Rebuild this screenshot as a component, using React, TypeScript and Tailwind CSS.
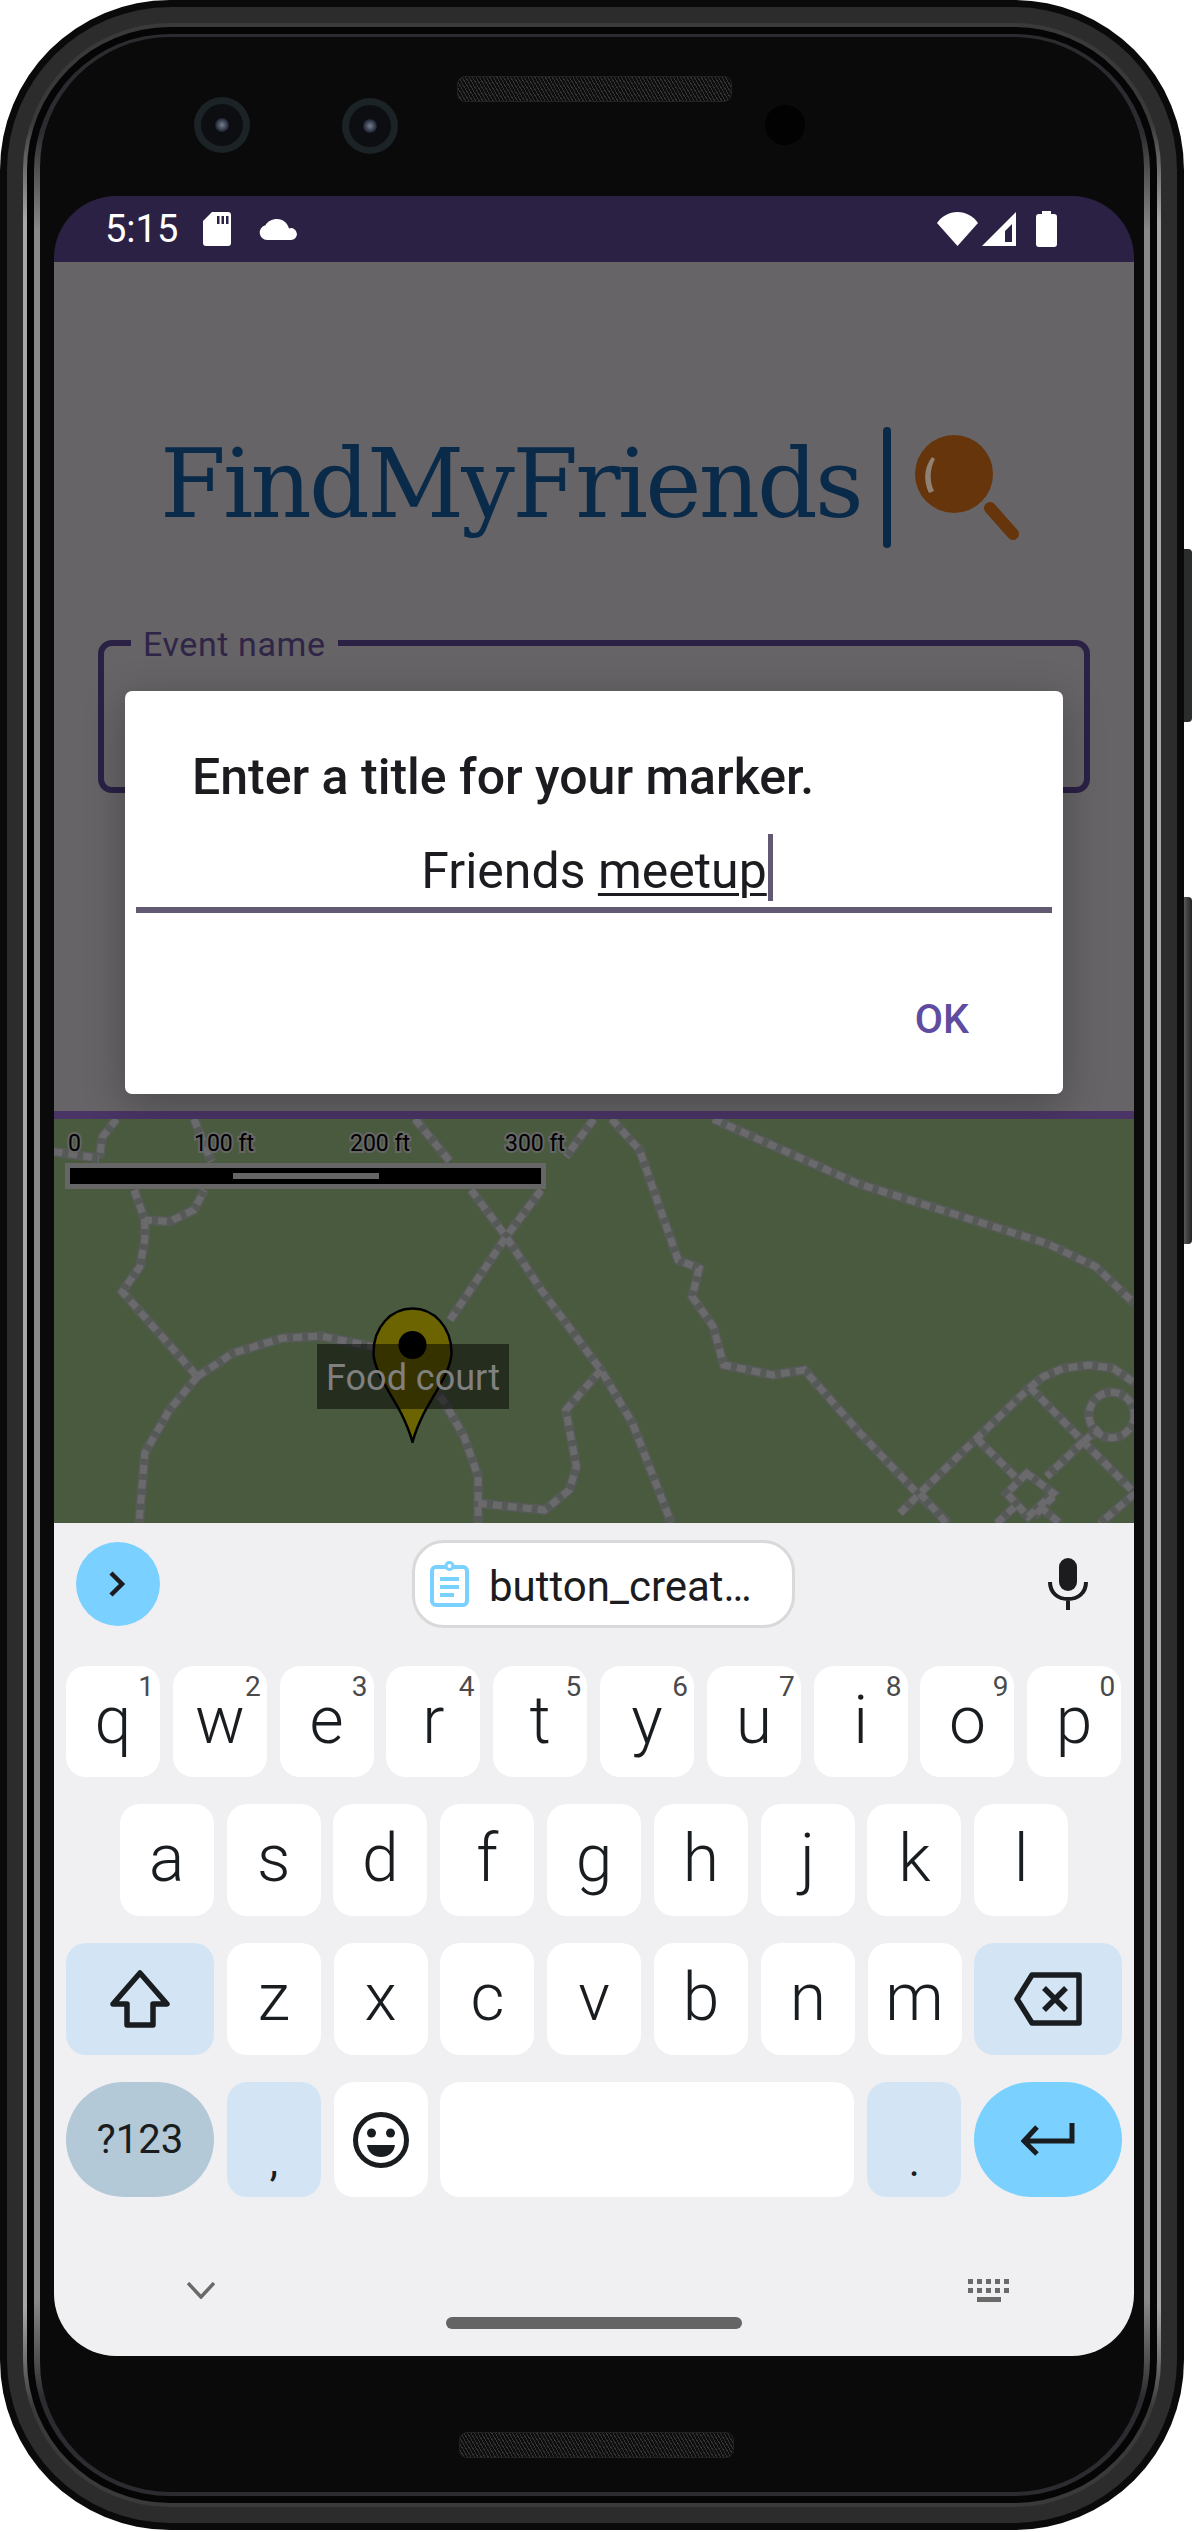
const row1 = [["q","1"],["w","2"],["e","3"],["r","4"],["t","5"],["y","6"],["u","7"],["i","8"],["o","9"],["p","0"]];
const row2 = ["a","s","d","f","g","h","j","k","l"];
const row3 = ["z","x","c","v","b","n","m"];

const trails = [
  "M95 57 L75 110 L70 175 M5 155 L70 175 M205 57 L230 185",
  "M120 270 L135 360 L170 365 L205 330 L220 270",
  "M135 360 L135 420 L128 500 L103 575 L210 830",
  "M210 830 L260 760 L330 715 L385 708 L460 740 L530 830 L560 900 L590 1010 L610 1130 L610 1268",
  "M210 830 L170 930 L135 1060 L127 1268",
  "M520 57 L570 185 M600 270 L650 410 L700 570 L785 810 L830 970 L885 1268",
  "M775 57 L735 170 M700 270 L650 410 L570 660",
  "M800 57 L840 150 L865 300 L895 480 L925 505 L915 590 L945 680 L960 795 L1030 825 L1075 810 L1150 990 L1240 1190 L1280 1268",
  "M785 810 L735 930 L750 1100 L740 1170 L705 1230 L610 1210",
  "M945 57 L1150 250 L1420 430 L1490 500 L1545 610",
];
const corner = [
  "M0 640 L60 580 L230 415 L390 262 L430 230 L490 205 L570 195 L640 205 L705 250",
  "M390 262 L550 425 L705 580",
  "M230 415 L350 535",
  "M380 520 L320 580 L385 650 L460 580 Z",
  "M550 425 L440 530",
  "M550 425 L600 385",
  "M290 670 L350 615",
  "M420 620 L480 670",
  "M460 590 L400 650",
  "M705 580 L600 670",
  "M60 580 L140 670",
];

function Trails({ paths, circle }: { paths: string[]; circle?: boolean }) {
  return (
    <>
      {[{ s: "#565a57", w: 10, a: undefined }, { s: "#6a6a6c", w: 7, a: "9 6" }].map((l, i) => (
        <g key={i} fill="none" stroke={l.s} strokeWidth={l.w} strokeDasharray={l.a}>
          {paths.map((d, j) => (
            <path key={j} d={d} vectorEffect="non-scaling-stroke" />
          ))}
          {circle ? <circle cx="635" cy="345" r="68" vectorEffect="non-scaling-stroke" /> : null}
        </g>
      ))}
    </>
  );
}

function Key({ label, hint, className = "bg-white", w = "w-[94px]" }: { label: string; hint?: string; className?: string; w?: string }) {
  return (
    <div className={`relative flex h-full ${w} shrink-0 items-center justify-center rounded-[20px] ${className} text-[66px] font-[350] leading-none text-[#1a1d20]`}>
      <span className="relative top-[-1px]">{label}</span>
      {hint ? <span className="absolute right-[6px] top-[3px] text-[28px] font-normal leading-[36px] text-[#4a4a4c]">{hint}</span> : null}
    </div>
  );
}

function Speaker({ className }: { className: string }) {
  return (
    <div className={`h-[26px] w-[275px] rounded-[8px] border border-[#222] bg-[#0c0c0c] bg-[repeating-linear-gradient(60deg,#333_0_1px,#0e0e0e_1px_3px)] ${className}`} />
  );
}

function Camera({ className }: { className: string }) {
  return (
    <div className={`flex h-[56px] w-[56px] shrink-0 items-center justify-center rounded-full bg-[#1b2327] ${className}`}>
      <div className="flex h-[42px] w-[42px] items-center justify-center rounded-full bg-[#0d0e12]">
        <div className="h-[14px] w-[14px] rounded-full bg-[radial-gradient(circle,#76808f_0,#1d2130_70%)]" />
      </div>
    </div>
  );
}

export default function App() {
  return (
    <div className="relative h-[2532px] w-[1194px] overflow-hidden bg-white font-['Roboto',sans-serif]">
      <div className="absolute left-[1182px] top-[549px] h-[173px] w-[10px] rounded-r-[4px] bg-[#2b2c2c]" />
      <div className="absolute left-[1182px] top-[897px] h-[347px] w-[10px] rounded-r-[4px] bg-[linear-gradient(to_right,#666,#222)]" />
      <div className="relative h-[2530px] w-[1184px] rounded-[170px] bg-[#0a0a0a] p-[7px]">
        <div className="h-full rounded-[163px] bg-[#2c2c2c] p-[16px]">
          <div className="h-full rounded-[147px] bg-[linear-gradient(to_bottom,#3a3a3a_0,#3a3a3a_4%,#a8a8a8_8%,#a8a8a8_92%,#3a3a3a_96%,#3a3a3a_100%)] p-[4px]">
            <div className="h-full rounded-[143px] bg-[#050505] p-[7px]">
              <div className="h-full rounded-[136px] bg-[linear-gradient(to_bottom,#2c2c30_0,#2c2c30_4%,#8a8a8a_8%,#8a8a8a_92%,#2c2c30_96%,#2c2c30_100%)] p-[6px] pb-[4px] pt-[3px]">
                <div className="h-full rounded-[130px] bg-[#0a0a0a] pl-[14px] pr-[7px]">
                  <div className="flex h-[159px] items-start pl-[140px]">
                    <Camera className="mt-[60px]" />
                    <Camera className="ml-[92px] mt-[61px]" />
                    <Speaker className="ml-[59px] mt-[39px] shrink-0" />
                    <div className="ml-[33px] mt-[68px] h-[40px] w-[40px] shrink-0 rounded-full bg-[#020202]" />
                  </div>

                  <div className="flex h-[2160px] w-[1080px] flex-col overflow-hidden rounded-[62px]">
                    {/* status bar */}
                    <div className="flex h-[66px] shrink-0 items-center bg-[#2b2145] pl-[51px] pr-[77px] text-white">
                      <span className="w-[74px] text-[38px] leading-none">5:15</span>
                      <svg className="ml-[24px]" width="28" height="34" viewBox="0 0 28 34">
                        <path fillRule="evenodd" fill="#fff" d="M9 0H25a3 3 0 0 1 3 3V31a3 3 0 0 1-3 3H3a3 3 0 0 1-3-3V9ZM14 4V12H16.500V4ZM18.500 4V12H21V4ZM23 4V12H25.500V4Z" />
                      </svg>
                      <svg className="ml-[28px]" width="38" height="21" viewBox="0 0 38 21">
                        <path fill="#fff" d="M8 21A7.500 7.500 0 0 1 6.500 6.200C8.500 2.500 13 0 18 0C24 0 28.500 4 30 9.500A6 6 0 0 1 38 15A6 6 0 0 1 32 21Z" />
                      </svg>
                      <svg className="ml-auto" width="41" height="34" viewBox="0 0 41 34">
                        <path fill="#fff" d="M20.500 34L0 11C5 4 12 0 20.500 0S36 4 41 11Z" />
                      </svg>
                      <svg className="ml-[4px]" width="34" height="34" viewBox="0 0 34 34">
                        <path fillRule="evenodd" fill="#fff" d="M34 0V34H0ZM23 19V30H30V12Z" />
                      </svg>
                      <svg className="ml-[20px]" width="21" height="36" viewBox="0 0 21 36">
                        <path fill="#fff" d="M6 0H15V3H18A3 3 0 0 1 21 6V33A3 3 0 0 1 18 36H3A3 3 0 0 1 0 33V6A3 3 0 0 1 3 3H6Z" />
                      </svg>
                    </div>

                    {/* dimmed page */}
                    <div className="relative h-[849px] shrink-0 bg-[#666467] pt-[165px]">
                      <div className="flex h-[121px] items-start pl-[106px]">
                        <span className="w-[723px] shrink-0 pt-[2px] font-['DejaVu_Serif',serif] text-[95px] leading-[110px] tracking-[-2.850px] text-[#0a2a4a]">FindMyFriends</span>
                        <div className="h-[121px] w-[8px] shrink-0 rounded-full bg-[#0a2a4a]" />
                        <svg className="ml-[24px] mt-[8px]" width="110" height="106" viewBox="0 0 110 106">
                          <circle cx="39" cy="39" r="39" fill="#66350c" />
                          <path d="M14 58C8 46 9 32 17 22L20 24C15 33 14 46 19 56Z" fill="#8f8275" />
                          <path d="M75 73L98 99" stroke="#66350c" strokeWidth="12" strokeLinecap="round" />
                        </svg>
                      </div>
                      <div className="relative mx-[44px] mt-[92px] h-[153px] rounded-[14px] border-[6px] border-[#2b2145]">
                        <span className="absolute left-[27px] top-[-22px] bg-[#666467] px-[12px] text-[34px] leading-[40px] tracking-[0.6px] text-[#2f2547]">Event name</span>
                      </div>

                      {/* dialog */}
                      <div className="absolute left-[71px] top-[429px] h-[403px] w-[938px] rounded-[7px] bg-white pt-[56px] shadow-[0_10px_40px_rgba(0,0,0,0.28)]">
                        <div className="pl-[67px] text-[50px] font-medium leading-[60px] text-[#1c1b1f]">Enter a title for your marker.</div>
                        <div className="mx-[11px] mt-[34px] border-b-[6px] border-[#625a73] pb-[6px] text-center text-[50px] leading-[60px] text-[#1c1b1f]">
                          <span className="relative">
                            Friends <span className="underline decoration-[3px] underline-offset-[5px]">meetup</span>
                            <span className="absolute left-full top-[-8px] ml-[1px] h-[67px] w-[5px] bg-[#625a73]" />
                          </span>
                        </div>
                        <div className="mt-[82px] pr-[94px] text-right text-[41px] font-medium leading-[48px] text-[#5f4ba0]">OK</div>
                      </div>
                    </div>

                    <div className="h-[8px] shrink-0 bg-[#4a3566]" />

                    {/* map */}
                    <div className="relative h-[404px] shrink-0 overflow-hidden bg-[#4a5a3f]">
                      <svg className="absolute inset-0" width="1080" height="404" viewBox="0 0 1080 404">
                        <g transform="translate(-4 -19) scale(0.7018 0.3333)">
                          <Trails paths={trails} />
                        </g>
                        <g transform="translate(846 181) scale(0.3333)">
                          <Trails paths={corner} circle />
                        </g>
                      </svg>
                      {[["0", 14], ["100 ft", 140], ["200 ft", 296], ["300 ft", 451]].map(([t, x]) => (
                        <span key={t} className="absolute top-[11px] text-[23px] leading-[28px] text-black [-webkit-text-stroke:4px_#666] [paint-order:stroke_fill]" style={{ left: x as number }}>{t}</span>
                      ))}
                      <div className="absolute left-[11px] top-[44px] flex h-[26px] w-[481px] items-center justify-center border-[5px] border-[#666] bg-black">
                        <div className="h-[6px] w-[146px] bg-[#666]" />
                      </div>
                      <svg className="absolute left-[318px] top-[188px]" width="81" height="136" viewBox="0 0 81 136">
                        <path d="M40.500 1.500C62 1.500 79.500 20 79.500 46C79.500 62 64 84 52 106C47 116 43 126 40.500 135C38 126 34 116 29 106C17 84 1.500 62 1.500 46C1.500 20 19 1.500 40.500 1.500Z" fill="#6b6400" stroke="#000" strokeWidth="2.500" />
                        <circle cx="40.500" cy="38" r="14" fill="#000" />
                      </svg>
                      <div className="absolute left-[263px] top-[225px] flex h-[65px] w-[192px] items-center justify-center bg-black/50 pt-[2px] text-[36px] leading-none text-[#808080]">Food court</div>
                    </div>

                    {/* keyboard */}
                    <div className="flex h-[833px] shrink-0 flex-col bg-[#f0f0f2] px-[12px] pt-[17px]">
                      <div className="flex h-[88px] shrink-0 items-center">
                        <div className="ml-[10px] flex h-[84px] w-[84px] shrink-0 items-center justify-center rounded-full bg-[#7ad0ff]">
                          <svg width="24" height="28" viewBox="0 0 24 28" fill="none" stroke="#1c1c1e" strokeWidth="4.500"><path d="M5 3L16 14L5 25" /></svg>
                        </div>
                        <div className="ml-[252px] flex h-[88px] w-[383px] shrink-0 items-center rounded-[32px] border-[3px] border-[#d9d9d9] bg-white pl-[15px]">
                          <svg width="39" height="46" viewBox="0 0 39 46" fill="none" stroke="#7ad0ff">
                            <rect x="2" y="6" width="35" height="38" rx="4" strokeWidth="4" />
                            <circle cx="19.500" cy="5" r="3.500" strokeWidth="3" fill="#fff" />
                            <path d="M10 18H29M10 26H29M10 34H24" strokeWidth="4" />
                          </svg>
                          <span className="relative top-[3px] ml-[20px] text-[42px] leading-none text-[#1c1c1e]">button_creat…</span>
                        </div>
                        <svg className="ml-[253px] shrink-0" width="40" height="52" viewBox="0 0 40 52">
                          <rect x="11" y="0" width="18" height="33" rx="9" fill="#1c1c1e" />
                          <path d="M2 24C2 35 10 41 20 41C30 41 38 35 38 24M20 41V52" fill="none" stroke="#1c1c1e" strokeWidth="4" />
                        </svg>
                      </div>

                      <div className="mt-[38px] flex h-[111px] shrink-0 gap-[12.800px]">
                        {row1.map(([k, h]) => <Key key={k} label={k} hint={h} />)}
                      </div>
                      <div className="mt-[27px] flex h-[112px] shrink-0 justify-center gap-[12.800px]">
                        {row2.map((k) => <Key key={k} label={k} />)}
                      </div>
                      <div className="mt-[27px] flex h-[112px] shrink-0 gap-[12.800px]">
                        <div className="flex h-full w-[148px] shrink-0 items-center justify-center rounded-[20px] bg-[#d3e5f4]">
                          <svg width="60" height="58" viewBox="0 0 60 58" fill="none" stroke="#1a1d20" strokeWidth="5.500" strokeLinejoin="round"><path d="M30 3L57 34H43V55H17V34H3Z" /></svg>
                        </div>
                        {row3.map((k) => <Key key={k} label={k} />)}
                        <div className="flex h-full w-[148px] shrink-0 items-center justify-center rounded-[20px] bg-[#d3e5f4]">
                          <svg width="68" height="54" viewBox="0 0 68 54" fill="none" stroke="#1a1d20" strokeWidth="5.500" strokeLinejoin="round"><path d="M18 3H65V51H18L3 27Z" /><path d="M30 16L52 38M52 16L30 38" /></svg>
                        </div>
                      </div>
                      <div className="mt-[27px] flex h-[115px] shrink-0 gap-[12.800px]">
                        <div className="flex h-full w-[148px] shrink-0 items-center justify-center rounded-full bg-[#b3c9d7] text-[40px] leading-none text-[#1a1d20]">?123</div>
                        <div className="flex h-full w-[94px] shrink-0 items-start justify-center rounded-[20px] bg-[#d3e5f4] pt-[59px] text-[42px] leading-none text-[#1a1d20]">,</div>
                        <div className="flex h-full w-[94px] shrink-0 items-center justify-center rounded-[20px] bg-white">
                          <svg width="56" height="56" viewBox="0 0 56 56">
                            <circle cx="28" cy="28" r="25.500" fill="none" stroke="#1a1d20" strokeWidth="5" />
                            <circle cx="18.500" cy="21" r="4.500" fill="#1a1d20" />
                            <circle cx="37.500" cy="21" r="4.500" fill="#1a1d20" />
                            <path d="M14 33H42C41 41 35 45 28 45C21 45 15 41 14 33Z" fill="#1a1d20" />
                          </svg>
                        </div>
                        <div className="h-full min-w-0 flex-1 rounded-[20px] bg-white" />
                        <div className="flex h-full w-[94px] shrink-0 items-start justify-center rounded-[20px] bg-[#d3e5f4] pt-[59px] text-[42px] leading-none text-[#1a1d20]">.</div>
                        <div className="flex h-full w-[148px] shrink-0 items-center justify-center rounded-full bg-[#7ad0ff]">
                          <svg width="54" height="34" viewBox="0 0 54 34" fill="none" stroke="#1a1d20" strokeWidth="5"><path d="M51 0V18H4M16 4L3 18L16 31" /></svg>
                        </div>
                      </div>

                      <div className="flex shrink-0 items-start pl-[121px] pr-[112px] pt-[82px]">
                        <svg className="mt-[3px]" width="28" height="17" viewBox="0 0 28 17" fill="none" stroke="#6a6a6a" strokeWidth="3.500"><path d="M1 1L14 15L27 1" /></svg>
                        <svg className="ml-auto" width="42" height="23" viewBox="0 0 42 23" fill="#6a6a6a">
                          {[0, 9, 18, 27, 36].map((x) => <rect key={x} x={x} y="0" width="5" height="5" />)}
                          {[0, 9, 18, 27, 36].map((x) => <rect key={x} x={x} y="9" width="5" height="5" />)}
                          <rect x="9" y="18" width="24" height="5" />
                        </svg>
                      </div>
                      <div className="mx-auto mt-[15px] h-[12px] w-[296px] shrink-0 rounded-full bg-[#646464]" />
                    </div>
                  </div>

                  <div className="flex justify-center pl-[2px]">
                    <Speaker className="mt-[76px]" />
                  </div>
                </div>
              </div>
            </div>
          </div>
        </div>
      </div>
    </div>
  );
}
